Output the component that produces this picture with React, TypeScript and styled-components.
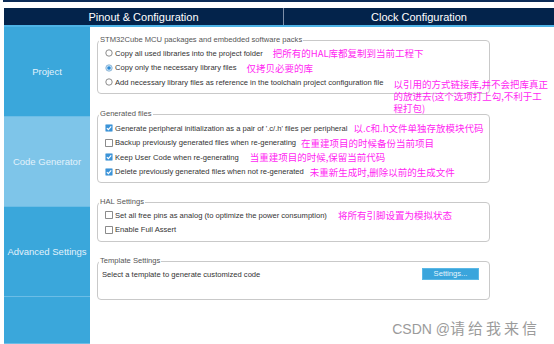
import React from "react";
import styled, { createGlobalStyle } from "styled-components";

const GlobalStyle = createGlobalStyle`
  html, body {
    margin: 0;
    padding: 0;
    background: #fff;
  }
  body {
    font-family: "Liberation Sans", Arial, sans-serif;
  }
`;

const Page = styled.div`
  position: relative;
  width: 554px;
  height: 344px;
  overflow: hidden;
  background: #fff;
`;

const TopEdge = styled.div`
  height: 8px;
  margin-left: 3px;
  border-top: 2px solid #0b2b57;
  box-sizing: border-box;
`;

const TabBar = styled.div`
  display: grid;
  grid-template-columns: 279px 1fr;
  height: 19px;
  margin-left: 4px;
  background: #03234b;
  border-bottom: 2px solid #4db3e6;
  box-sizing: border-box;
`;

const Tab = styled.div<{ $divider?: boolean }>`
  display: flex;
  align-items: center;
  justify-content: center;
  color: #fff;
  font-size: 11px;
  border-left: ${(p) => (p.$divider ? "1px solid #7d8ea8" : "none")};
`;

const Body = styled.div`
  display: flex;
  height: 317px;
  margin-left: 4px;
`;

const Sidebar = styled.div`
  display: flex;
  flex-direction: column;
  width: 86px;
  background: #3aa7db;
`;

const SideItem = styled.div<{ $active?: boolean; $grow?: boolean }>`
  display: flex;
  align-items: center;
  justify-content: center;
  height: 90px;
  flex: ${(p) => (p.$grow ? "1" : "none")};
  box-sizing: border-box;
  background: ${(p) => (p.$active ? "#7ec5e9" : "#3aa7db")};
  border-bottom: 1px solid #6cbde6;
  color: #e2f2fb;
  font-size: 9.5px;
  white-space: nowrap;
`;

const Content = styled.div`
  display: flex;
  flex-direction: column;
  padding: 8px 0 0 7px;
`;

const Box = styled.fieldset<{ $mt?: number; $pt: number; $pb: number }>`
  width: 393px;
  min-width: 0;
  box-sizing: border-box;
  margin: ${(p) => p.$mt || 0}px 0 0 0;
  padding: ${(p) => p.$pt}px 6px ${(p) => p.$pb}px 6px;
  border: 1px solid #c9c9c9;
  border-radius: 4px;
`;

const Legend = styled.legend`
  margin-left: -5px;
  padding: 0 1px;
  font-size: 7.6px;
  line-height: 10px;
  color: #555;
`;

const Row = styled.div`
  display: flex;
  align-items: center;
  height: 14.5px;
  font-size: 7.6px;
  color: #333;
  white-space: nowrap;
`;

const Mark = styled.svg`
  flex: none;
  width: 8px;
  height: 8px;
  margin: 0 2px 0 1px;
`;

const Note = styled.span<{ $ml: number }>`
  margin-left: ${(p) => p.$ml}px;
  font-family: "Noto Sans CJK SC", sans-serif;
  font-size: 9.5px;
  line-height: 12px;
  color: #ff1ff2;
`;

const WrapNote = styled(Note)`
  display: flex;
  flex-direction: column;
  align-self: flex-start;
  margin-top: 3px;
  white-space: nowrap;
`;

const NoteLine = styled.span`
  display: block;
  height: 12px;
  overflow: visible;
`;

const TemplateRow = styled(Row)`
  justify-content: space-between;
  height: 14px;
  margin-left: -2px;
`;

const SettingsButton = styled.button`
  width: 57px;
  height: 12px;
  margin-right: 4px;
  padding: 0;
  border: 1px solid #5ab8e6;
  background: #3aa5dc;
  color: #e6f5fd;
  font-family: "Liberation Sans", Arial, sans-serif;
  font-size: 7.6px;
  line-height: 10px;
`;

const Watermark = styled.div`
  position: absolute;
  right: 14px;
  top: 317px;
  font-size: 14px;
  color: #9b9b9b;
  white-space: nowrap;
  span {
    font-family: "Noto Sans CJK SC", sans-serif;
    font-size: 15px;
    letter-spacing: 3px;
  }
`;

const Radio: React.FC<{ on?: boolean }> = ({ on }) => (
  <Mark viewBox="0 0 8 8">
    <circle cx="4" cy="4" r="3.2" fill={on ? "#cfe6f7" : "#fff"} stroke={on ? "#7aa9cf" : "#6f6f6f"} strokeWidth="0.8" />
    {on && <circle cx="4" cy="4" r="1.8" fill="#2b8ad6" />}
  </Mark>
);

const Check: React.FC<{ on?: boolean }> = ({ on }) => (
  <Mark viewBox="0 0 8 8">
    {on ? (
      <>
        <rect x="0.5" y="0.5" width="7" height="7" rx="0.8" fill="#3b93d8" stroke="#8cbfe6" strokeWidth="0.6" />
        <path d="M1.9 4.1 L3.4 5.6 L6.2 2.3" fill="none" stroke="#fff" strokeWidth="1.2" />
      </>
    ) : (
      <rect x="0.6" y="0.6" width="6.8" height="6.8" fill="#fff" stroke="#6f6f6f" strokeWidth="0.8" />
    )}
  </Mark>
);

export default function App() {
  return (
    <Page>
      <GlobalStyle />
      <TopEdge />
      <TabBar>
        <Tab>Pinout &amp; Configuration</Tab>
        <Tab $divider>Clock Configuration</Tab>
      </TabBar>
      <Body>
        <Sidebar>
          <SideItem>Project</SideItem>
          <SideItem $active>Code Generator</SideItem>
          <SideItem>Advanced Settings</SideItem>
          <SideItem $grow />
        </Sidebar>
        <Content>
          <Box $pt={1} $pb={3.5}>
            <Legend>STM32Cube MCU packages and embedded software packs</Legend>
            <Row>
              <Radio />
              Copy all used libraries into the project folder
              <Note $ml={10}>把所有的HAL库都复制到当前工程下</Note>
            </Row>
            <Row>
              <Radio on />
              Copy only the necessary library files
              <Note $ml={10}>仅拷贝必要的库</Note>
            </Row>
            <Row>
              <Radio />
              Add necessary library files as reference in the toolchain project configuration file
              <WrapNote $ml={10}>
                <NoteLine>以引用的方式链接库,并不会把库真正</NoteLine>
                <NoteLine>的放进去(这个选项打上勾,不利于工</NoteLine>
                <NoteLine>程打包)</NoteLine>
              </WrapNote>
            </Row>
          </Box>
          <Box $mt={15} $pt={2} $pb={3}>
            <Legend>Generated files</Legend>
            <Row>
              <Check on />
              Generate peripheral initialization as a pair of '.c/.h' files per peripheral
              <Note $ml={6}>以.c和.h文件单独存放模块代码</Note>
            </Row>
            <Row>
              <Check />
              Backup previously generated files when re-generating
              <Note $ml={5}>在重建项目的时候备份当前项目</Note>
            </Row>
            <Row>
              <Check on />
              Keep User Code when re-generating
              <Note $ml={11}>当重建项目的时候,保留当前代码</Note>
            </Row>
            <Row>
              <Check on />
              Delete previously generated files when not re-generated
              <Note $ml={6}>未重新生成时,删除以前的生成文件</Note>
            </Row>
          </Box>
          <Box $mt={14} $pt={1} $pb={4}>
            <Legend>HAL Settings</Legend>
            <Row>
              <Check />
              Set all free pins as analog (to optimize the power consumption)
              <Note $ml={11}>将所有引脚设置为模拟状态</Note>
            </Row>
            <Row>
              <Check />
              Enable Full Assert
            </Row>
          </Box>
          <Box $mt={14} $pt={1} $pb={18}>
            <Legend>Template Settings</Legend>
            <TemplateRow>
              Select a template to generate customized code
              <SettingsButton>Settings...</SettingsButton>
            </TemplateRow>
          </Box>
        </Content>
      </Body>
      <Watermark>
        CSDN @<span>请给我来信</span>
      </Watermark>
    </Page>
  );
}
